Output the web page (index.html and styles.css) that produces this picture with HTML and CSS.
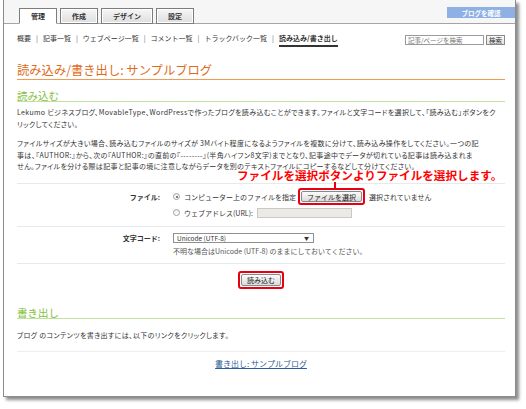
FILE: index.html
```html
<!DOCTYPE html>
<html lang="ja">
<head>
<meta charset="utf-8">
<title>読み込み/書き出し</title>
<link rel="stylesheet" href="styles.css">
</head>
<body>
<div class="window">
  <div class="header">
    <div class="tabs">
      <span class="tab active">管理</span>
      <span class="tab">作成</span>
      <span class="tab wide">デザイン</span>
      <span class="tab">設定</span>
    </div>
    <a class="view-blog">ブログを確認</a>
  </div>
  <div class="nav">
    <div class="nav-links">
      <a>概要</a><span class="sep">|</span><a>記事一覧</a><span class="sep">|</span><a>ウェブページ一覧</a><span class="sep">|</span><a>コメント一覧</a><span class="sep">|</span><a>トラックバック一覧</a><span class="sep">|</span><a class="current">読み込み/書き出し</a>
    </div>
    <div class="search">
      <span class="search-input">記事/ページを検索</span><span class="search-btn">検索</span>
    </div>
  </div>
  <div class="content">
    <h1 class="title">読み込み/書き出し: サンプルブログ</h1>
    <h2 class="section">読み込む</h2>
    <p class="text p1">Lekumo ビジネスブログ、MovableType、WordPressで作ったブログを読み込むことができます。ファイルと文字コードを選択して、「読み込む」ボタンをク<br>リックしてください。</p>
    <p class="text p2">ファイルサイズが大きい場合、読み込むファイルのサイズが 3Mバイト程度になるようファイルを複数に分けて、読み込み操作をしてください。一つの記<br>事は、『AUTHOR:』から、次の『AUTHOR:』の直前の『--------』(半角ハイフン8文字)までとなり、記事途中でデータが切れている記事は読み込まれま<br>せん。ファイルを分ける際は記事と記事の境に注意しながらデータを別のテキストファイルにコピーするなどして分けてください。</p>
    <div class="field file-field">
      <div class="field-label">ファイル:</div>
      <div class="field-body">
        <div class="radio-row">
          <span class="radio checked"></span><span>コンピューター上のファイルを指定</span>
          <span class="hl"><span class="btn">ファイルを選択</span></span>
          <span class="nofile">選択されていません</span>
        </div>
        <div class="radio-row row2">
          <span class="radio"></span><span>ウェブアドレス(URL):</span>
          <span class="url-input"></span>
        </div>
      </div>
    </div>
    <div class="field enc-field">
      <div class="field-label">文字コード:</div>
      <div class="field-body">
        <div class="select"><span>Unicode (UTF-8)</span><span class="arrow">▼</span></div>
        <div class="hint">不明な場合はUnicode (UTF-8) のままにしておいてください。</div>
      </div>
    </div>
    <div class="actions">
      <span class="hl"><span class="btn submit">読み込む</span></span>
    </div>
    <h2 class="section export">書き出し</h2>
    <p class="text p3">ブログ のコンテンツを書き出すには、以下のリンクをクリックします。</p>
    <div class="export-link"><a>書き出し: サンプルブログ</a></div>
  </div>
  <div class="annotation">ファイルを選択ボタンよりファイルを選択します。</div>
  <div class="callout-line"></div>
</div>
</body>
</html>
```
FILE: styles.css
```css
* { box-sizing: border-box; }
html, body { margin: 0; padding: 0; background: #fff; }
body {
  font-family: "Noto Sans CJK JP", "Noto Sans", sans-serif;
  font-size: 7px;
  color: #333;
  width: 526px;
  height: 409px;
  overflow: hidden;
}
.window {
  position: relative;
  margin-left: 3px;
  width: 513px;
  height: 397px;
  background: #fff;
  border: 1px solid #8c8c8c;
  border-top: none;
  box-shadow: 3px 3px 3px rgba(0,0,0,0.45);
}
.header {
  display: flex;
  align-items: flex-end;
  height: 24px;
  padding-left: 15px;
  background: #f6f6f6;
  border-bottom: 1px solid #a5a5a5;
}
.tabs { display: flex; gap: 2px; align-items: flex-end; }
.tab {
  width: 38px;
  height: 16px;
  margin-bottom: -1px;
  display: flex;
  align-items: center;
  justify-content: center;
  font-weight: bold;
  font-size: 7px;
  color: #333;
  border: 1px solid #7d7d7d;
  box-shadow: inset 0 0 0 1px #fff;
  background: linear-gradient(#f6f6f6, #dedede);
}
.tab + .tab { margin-left: 1px; }
.tab.wide { width: 52px; }
.tab.active { background: #fff; border-bottom-color: #fff; }
.view-blog {
  margin-left: auto;
  align-self: flex-start;
  margin-top: 7px;
  width: 68px;
  height: 11px;
  background: #8eb0e4;
  color: #fff;
  font-weight: bold;
  font-size: 6.5px;
  display: flex;
  align-items: center;
  justify-content: center;
}
.nav {
  display: flex;
  justify-content: space-between;
  align-items: flex-start;
  height: 26px;
  padding: 9px 10px 0 13px;
}
.nav-links { line-height: 10px; display: flex; align-items: flex-start; }
.nav-links a { color: #333; }
.nav-links .sep { margin: 0 5px; color: #666; }
.nav-links .current {
  font-weight: bold;
  padding-bottom: 2px;
  border-bottom: 2px solid #333;
}
.search { display: flex; gap: 2px; margin-top: 2px; }
.search-input {
  width: 79px;
  height: 10px;
  border: 1px solid #9a9a9a;
  color: #777;
  line-height: 8px;
  padding-left: 2px;
  font-size: 6.5px;
}
.search-btn {
  width: 19px;
  height: 10px;
  border: 1px solid #8a8a8a;
  background: linear-gradient(#fafafa, #e2e2e2);
  line-height: 8px;
  text-align: center;
  font-size: 6.5px;
}
.content { padding: 0 10px 0 13px; }
.title {
  margin: 13px 0 0;
  font-size: 12.3px;
  font-weight: normal;
  line-height: 14px;
  color: #de6c1c;
  padding-bottom: 2px;
  border-bottom: 1px solid #ef9a55;
}
.section {
  margin: 10px 0 0;
  font-size: 10.5px;
  font-weight: normal;
  line-height: 11px;
  color: #86c040;
  border-bottom: 1px solid #bfe39e;
}
.text {
  margin: 0;
  line-height: 11.5px;
  font-feature-settings: "palt";
  letter-spacing: 0.35px;
}
.p1 { margin-top: 5px; }
.p2 { margin-top: 8px; }
.field {
  display: flex;
  border-top: 1px solid #e6eaee;
}
.file-field { margin-top: 10px; padding: 5px 0 7px; }
.enc-field { padding: 6px 0 5px; border-bottom: 1px solid #e6eaee; }
.field-label {
  width: 156px;
  padding-right: 13px;
  text-align: right;
  font-weight: bold;
  flex: none;
}
.file-field .field-label { line-height: 16px; }
.enc-field .field-label { line-height: 10px; }
.radio-row { display: flex; align-items: center; height: 16px; gap: 4px; }
.radio-row.row2 { height: 12px; margin-top: 2px; }
.radio {
  width: 7px;
  height: 7px;
  border-radius: 50%;
  border: 1px solid #a0a0a0;
  background: linear-gradient(#eee, #fff);
  position: relative;
  flex: none;
}
.radio.checked::after {
  content: "";
  position: absolute;
  left: 1.5px;
  top: 1.5px;
  width: 2px;
  height: 2px;
  border-radius: 50%;
  background: #555;
}
.hl {
  display: inline-flex;
  border: 2px solid #e60012;
  border-radius: 3px;
  padding: 1px;
  background: #fff;
}
.btn {
  display: inline-flex;
  align-items: center;
  justify-content: center;
  height: 11px;
  padding: 0 5px;
  border: 1px solid #8a8a8a;
  border-radius: 2px;
  background: linear-gradient(#fbfbfb, #dcdcdc);
  color: #222;
  font-size: 7px;
}
.file-field .hl { margin-left: -2px; }
.url-input {
  width: 95px;
  height: 10px;
  border: 1px solid #c9c9c9;
  background: #ebeae4;
}
.select {
  width: 141px;
  height: 10px;
  border: 1px solid #8f8f8f;
  display: flex;
  justify-content: space-between;
  align-items: center;
  padding: 0 4px 0 3px;
  font-size: 6.5px;
  line-height: 8px;
}
.select .arrow { font-size: 5px; }
.hint { margin-top: 3.5px; line-height: 11.5px; color: #555; }
.actions { display: flex; justify-content: center; padding: 7px 0 0; }
.submit { width: 40px; height: 12px; }
.section.export { margin-top: 18px; }
.p3 { margin-top: 11px; padding-bottom: 10px; border-bottom: 1px solid #eceef0; }
.export-link { margin-top: 6px; text-align: center; line-height: 11px; }
.export-link a { color: #2d5c9a; text-decoration: underline; font-size: 8px; }
.annotation {
  position: absolute;
  left: 233px;
  top: 168px;
  font-size: 11.6px;
  line-height: 14px;
  font-weight: bold;
  color: #ff0000;
  white-space: nowrap;
  text-shadow: 1px 0 #fff, -1px 0 #fff, 0 1px #fff, 0 -1px #fff;
}
.callout-line {
  position: absolute;
  left: 330px;
  top: 182px;
  width: 1.5px;
  height: 7px;
  background: #e60012;
}
```
